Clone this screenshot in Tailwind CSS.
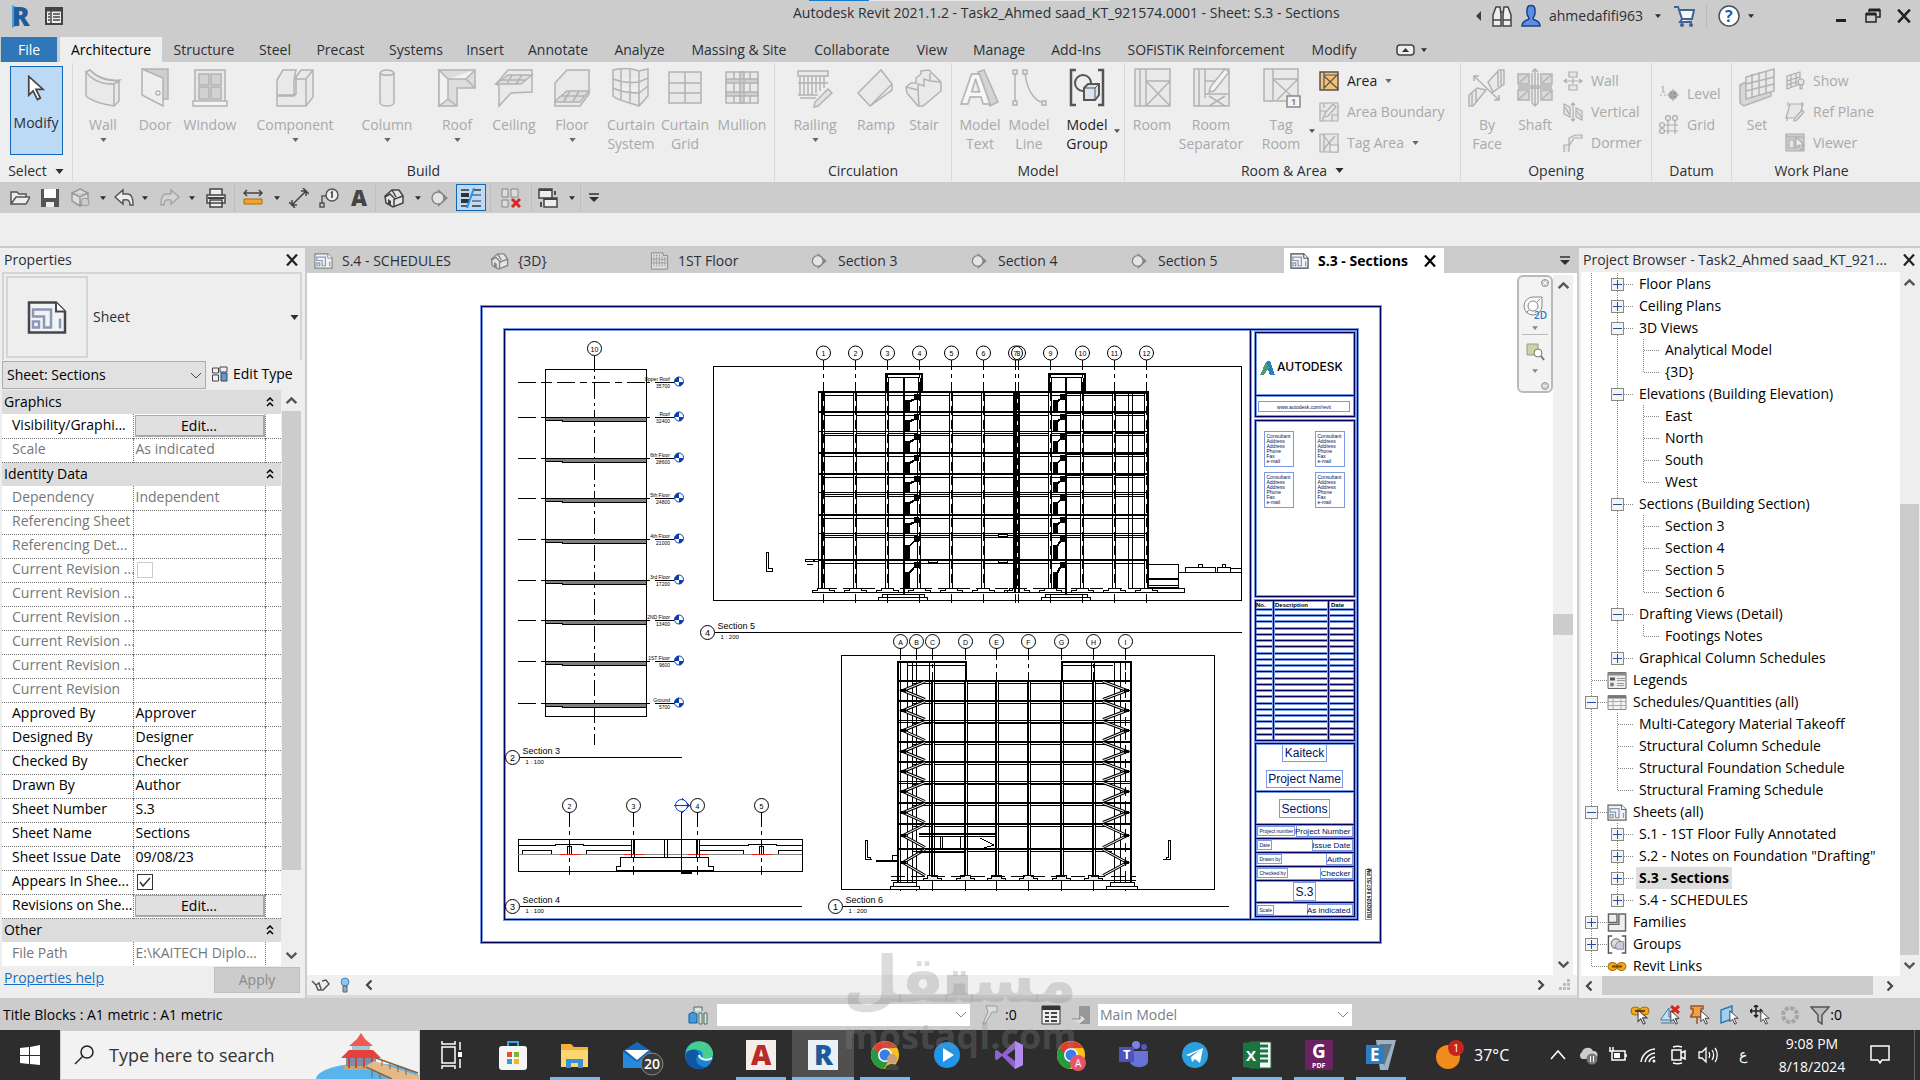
<!DOCTYPE html>
<html lang="en">
<head>
  <meta charset="UTF-8">
  <meta name="viewport" content="width=device-width, initial-scale=1.0">
  <title>Autodesk Revit 2021.1.2</title>
  <script src="https://cdn.jsdelivr.net/npm/@tailwindcss/browser@4"></script>
</head>
<body class="relative flex h-screen flex-col overflow-hidden bg-[#eeeeee] font-['Open_Sans',sans-serif] text-sm text-[#2b2f36]">

  <!-- Icon symbols -->
  <svg class="hidden">
    <symbol id="down" viewBox="0 0 8 5"><path d="M0 0h8L4 5z" fill="currentColor"/></symbol>
    <symbol id="chev" viewBox="0 0 12 12"><path d="M1.500 8.500L6 4l4.500 4.500" fill="none" stroke="currentColor" stroke-width="2.200"/></symbol>
    <symbol id="thin" viewBox="0 0 10 6"><path d="M0 0l5 5 5-5" fill="none" stroke="currentColor"/></symbol>
    <symbol id="close" viewBox="0 0 12 12"><path d="M1 0.500l10 11M11 0.500L1 11.500" stroke="currentColor" stroke-width="2.200"/></symbol>
    <symbol id="menu" viewBox="0 0 10 9"><path d="M0 1h10" stroke="currentColor" stroke-width="1.500"/><path d="M0 4h10L5 9z" fill="currentColor"/></symbol>

    <!-- Ribbon, large -->
    <symbol id="wall" viewBox="0 0 40 40"><path d="M3 4l4-2c8 8 18 11 30 10l-3 3C21 15 12 13 3 4z" fill="#f6f6f6"/><path d="M3 4l4-2c6 7 16 11 29 11v20l-5 5C20 36 10 34 3 28zM3 4c8 10 17 12 28 12v22M31 16l5-3"/></symbol>
    <symbol id="door" viewBox="0 0 40 40"><path d="M7 1h26v30h-5" fill="#cfcfcf"/><path d="M7 1l21 9v28L7 27z" fill="#eee"/><circle cx="23" cy="25" r="2" fill="#fff"/></symbol>
    <symbol id="window" viewBox="0 0 40 40"><path d="M5 2h30v32H5z"/><path d="M9 6h10v11H9zM21 6h10v11H21zM9 19h10v12H9zM21 19h10v12H21z" fill="#d2d2d2"/><path d="M3 33h34v5H3z" fill="#f4f4f4"/></symbol>
    <symbol id="component" viewBox="0 0 40 40"><path d="M2 12l6-10h13l-2 10v15H2zM21 9l5-7h12v27l-7 9H2V28h17M21 9v17l-2 2M24 11h-3M31 11l7-9M24 11h7v27"/></symbol>
    <symbol id="column" viewBox="0 0 40 40"><path d="M13 5v30c2 4 12 4 14 0V5c-2-4-12-4-14 0zM13 5c2 3 12 3 14 0"/></symbol>
    <symbol id="roof" viewBox="0 0 40 40"><path d="M2 2h36v18H20v18H2z" fill="#ddd"/><path d="M2 2l9 9v20L2 38zM38 2l-9 9H11M11 31l9 7M29 11l9 9" fill="#f2f2f2"/></symbol>
    <symbol id="ceiling" viewBox="0 0 40 40"><path d="M2 16L14 2h24v22l-21 1L5 38V18z"/><path d="M2 16L14 7h24l-11 9zM8 12h23M18 7l-5 9M28 7l-6 9" fill="#dedede"/></symbol>
    <symbol id="floor" viewBox="0 0 40 40"><path d="M3 15L15 2h22v24L28 38H3z"/><path d="M3 33l12-10h22L28 34H3zM9 28h23M18 23l-6 10M27 23l-6 10" fill="#dcdcdc"/></symbol>
    <symbol id="curtain" viewBox="0 0 40 40"><path d="M2 2c8-2 18-2 26 1l9-2v27l-9 10C18 34 9 34 2 28zM28 3v35M2 11c8 3 18 4 26 3l9-4M2 20c8 4 18 5 26 5l9-7M10 1v32M19 1v34"/></symbol>
    <symbol id="grid" viewBox="0 0 40 40"><path d="M4 4h32v31H4zM20 4v31M4 15h32M4 25h32" /></symbol>
    <symbol id="mullion" viewBox="0 0 40 40"><path d="M4 4h32v31H4zM12 4v31M28 4v31"/><path d="M4 11h32v4H4zM4 24h32v4H4zM18 4h4v31h-4z" fill="#d0d0d0"/></symbol>
    <symbol id="railing" viewBox="0 0 40 40"><path d="M3 3h30v5H3zM5 8v19M9 8v19M13 8v19M17 8v19M21 8v17M25 8v15M29 8v12M3 15h30M3 27h20M5 30h16"/><path d="M33 21l4 4-14 13-4 1 1-5z" fill="#e2e2e2"/></symbol>
    <symbol id="ramp" viewBox="0 0 40 40"><path d="M2 25L25 2l11 14v6L14 38zM36 16L14 38"/></symbol>
    <symbol id="stair" viewBox="0 0 40 40"><path d="M2 19l5-4h5v-5l5-4V3l8-1 12 12v9L19 38h-5L3 25z"/><path d="M2 19l12 3v-6l6 2v-7l6 2V5M14 22l1 16M26 13l11 1" fill="none"/></symbol>
    <symbol id="mtext" viewBox="0 0 40 40"><path d="M18 4l6-2 14 32-8 4z" fill="#d4d4d4"/><text x="1" y="36" font-family="Open Sans" font-weight="700" font-size="42" fill="#f7f7f7">A</text></symbol>
    <symbol id="mline" viewBox="0 0 40 40" ><path d="M6 4v31M16 4c1 15 8 29 19 31" fill="none"/><path d="M4 2h4v4H4zM4 33h4v4H4zM14 2h4v4h-4zM33 33h4v4h-4z"/></symbol>
    <symbol id="mgroup" viewBox="0 0 40 40"><g stroke="#555" stroke-width="2"><path d="M9 2H4v35h5M31 2h5v35h-5" fill="none" stroke-width="2.500"/><circle cx="16" cy="15" r="8" fill="#eee"/><path d="M17 20l4-4h11v11l-4 5H17z" fill="#dbe4ee"/><path d="M17 20h11v12M28 20l4-4" fill="none" stroke-width="1"/></g></symbol>
    <symbol id="room" viewBox="0 0 40 40"><path d="M3 1h35v37H3zM8 1v37M14 1v29M14 34v4M14 13h24v25H14zM14 13l24 25M38 13L14 38" /></symbol>
    <symbol id="roomsep" viewBox="0 0 40 40"><path d="M3 1h35v37H3zM8 1v37M14 1v29M14 26h24M18 28l16 10M34 28L18 38M14 13h10"/><path d="M34 1l4 3-15 19-5 1 2-6z" fill="#f3f3f3"/></symbol>
    <symbol id="tagroom" viewBox="0 0 40 40"><path d="M3 1h34v32H3zM12 1v32M12 11h25M12 11l24 22M37 11L16 32"/><path d="M26 28h13v11H26z" fill="#f4f4f4" stroke="#888"/><text x="30" y="37" font-size="9" font-weight="700" stroke="none" fill="#888">1</text></symbol>
    <symbol id="byface" viewBox="0 0 40 40"><path d="M2 27l8-7 9 2L6 38H2zM21 14L32 2h5v14L26 24zM7 8l25 24M7 13V8h5M32 27v5h-5M5 25v12M9 22v13M31 4v15M34 3v15" /></symbol>
    <symbol id="shaft" viewBox="0 0 40 40"><path d="M3 6h11v10H3zM26 6h11v10H26zM3 22h11v10H3zM26 22h11v10H26z" fill="#d8d8d8"/><path d="M3 18h34M3 20h34M17 5v30M23 5v30M20 1v37M17 4l3-3 3 3M17 35l3 3 3-3M4 15l9-8M27 15l9-8M4 31l9-8M27 31l9-8" fill="none"/></symbol>
    <symbol id="set" viewBox="0 0 40 40"><path d="M3 17l4-2 27-12v25L7 38l-4-3z" fill="#d6d6d6"/><path d="M9 9v22l28-8V1zM15 6v23M22 4v23M29 3v22M9 16l28-7M9 23l28-7"/></symbol>

    <!-- Ribbon, small -->
    <symbol id="area" viewBox="0 0 20 20"><path d="M1 1h18v18H1z" fill="#f6c173" stroke="#555" stroke-width="1.500"/><path d="M5 1v18M5 5l14 13M19 3L5 17M5 4h14" fill="none" stroke="#555"/></symbol>
    <symbol id="areab" viewBox="0 0 20 20"><path d="M1 1h18v18H1zM5 1v5M1 9h6M4 19v-4M13 19v-6h6"/><path d="M14 2l3 3-8 9-4 1 1-4z"/></symbol>
    <symbol id="areat" viewBox="0 0 20 20"><path d="M1 1h18v18H1zM4 2l12 15M16 3L4 17M5 1v18"/><path d="M11 12h8v7h-8z" fill="#eee"/></symbol>
    <symbol id="vwall" viewBox="0 0 20 20"><path d="M6 1h8v5H6zM6 14h8v5H6zM1 10h18M4 8l-3 2 3 2M16 8l3 2-3 2M10 7v6"/></symbol>
    <symbol id="vert" viewBox="0 0 20 20"><path d="M1 2l6 3v10l-6-3zM13 6l6 3v9l-6-3zM10 1v18M8 3l2-2 2 2M8 17l2 2 2-2M2 5l4 7M14 9l4 6"/></symbol>
    <symbol id="dormer" viewBox="0 0 20 20"><path d="M1 19v-7h5v7M6 12V5L12 2h7v3h-8l-5 8"/></symbol>
    <symbol id="level" viewBox="0 0 20 20"><path d="M1 11h2M5 11h2M9 11h2M4 2v6M3 3l1-1M3 8h3"/><circle cx="14" cy="11" r="4" fill="#999"/><path d="M14 5v12M8 11h12"/></symbol>
    <symbol id="gridi" viewBox="0 0 20 20"><path d="M9 6v13M16 6v13M5 10h14M5 16h14"/><circle cx="9" cy="3" r="2.500"/><circle cx="16" cy="3" r="2.500"/><circle cx="3" cy="10" r="2.500"/><circle cx="3" cy="16" r="2.500"/></symbol>
    <symbol id="show" viewBox="0 0 20 20"><path d="M2 5l13-4v12L2 18zM6 4v13M11 2v12M2 10l13-4M2 14l13-4"/><circle cx="16" cy="11" r="3"/><path d="M15 14h2v4h-2z"/></symbol>
    <symbol id="refp" viewBox="0 0 20 20"><path d="M5 2h13l-4 14H1zM3 0v4M17 0v5M2 15v4"/><path d="M17 8l2 2-7 8-3 1 1-3z"/></symbol>
    <symbol id="viewer" viewBox="0 0 20 20"><path d="M1 1h18v17H1zM1 4h18" fill="#ccc"/><path d="M4 7h5v8H4z"/><path d="M11 4v11l3-3 2 5 2-1-2-4h3z" fill="#eee"/></symbol>

    <!-- Documents and tree -->
    <symbol id="sheet" viewBox="0 0 40 34"><path d="M2 2h27l9 9v21H2z" fill="#f2f3f5" stroke="currentColor" stroke-width="2.500"/><path d="M29 2v9h9" fill="#fff" stroke="currentColor" stroke-width="2"/><path d="M6 9h18v18h-7V16H6zM6 21h6v6H6zM33 18v10" fill="none" stroke="#8a97b5" stroke-width="2.500"/></symbol>
    <symbol id="house" viewBox="0 0 20 20"><path d="M1 8l7-6 7 0 4 6v7l-10 4-7-4z" fill="#e4e4e4" stroke="currentColor" stroke-width="1.500"/><path d="M1 9l5-3 5 5 8-3M10 11v8M8 2l4 7" fill="none" stroke="currentColor" stroke-width="1.500"/><path d="M4 11l3 2v5l-3-2z" fill="currentColor"/></symbol>
    <symbol id="plan" viewBox="0 0 20 20"><path d="M1 1h13v3h5v15H1z" fill="#ddd" stroke="currentColor"/><path d="M4 3v13M7 3v13M10 3v13M13 5v11M16 6v10M2 8h16M2 12h16" stroke="currentColor" stroke-dasharray="2 1"/></symbol>
    <symbol id="sect" viewBox="0 0 20 20"><path d="M8 1l10 9-10 9z" fill="currentColor"/><circle cx="8" cy="10" r="6" fill="#e4e4e4" stroke="currentColor" stroke-width="1.500"/></symbol>
    <symbol id="legend" viewBox="0 0 20 18"><path d="M1 1h18v16H1z" fill="#eee" stroke="#666"/><path d="M1 1h18v3H1z" fill="#888"/><path d="M3 6h5v3H3z" fill="#555"/><circle cx="5" cy="13" r="2" fill="#777"/><path d="M10 7h8M10 9h8M10 12h7M10 14h7" stroke="#999"/></symbol>
    <symbol id="sched" viewBox="0 0 20 16"><path d="M1 1h18v14H1z" fill="#f4f4f4" stroke="#888"/><path d="M1 1h18v3H1z" fill="#777"/><path d="M1 7h18M1 11h18M6 4v11M14 4v11" stroke="#aaa"/></symbol>
    <symbol id="family" viewBox="0 0 20 20"><path d="M1 1h9v9H1zM12 1h7v18H1v-7h11z" fill="#eee" stroke="#666" stroke-width="1.500"/></symbol>
    <symbol id="group" viewBox="0 0 20 20"><path d="M5 1H1v18h4M15 1h4v18h-4" fill="none" stroke="#555" stroke-width="1.500"/><circle cx="9" cy="9" r="5" fill="#ddd" stroke="#888" stroke-width="1.500"/><path d="M8 11l3-4h6v8h-7z" fill="#ccd" stroke="#888"/></symbol>
    <symbol id="link" viewBox="0 0 20 12"><rect x="1" y="2" width="9" height="8" rx="4" fill="#f3a71b" stroke="#a96c06"/><rect x="10" y="2" width="9" height="8" rx="4" fill="#f3a71b" stroke="#a96c06"/><path d="M5 6h10" stroke="#704300" stroke-width="2"/></symbol>
    <symbol id="cursor" viewBox="0 0 12 18"><path d="M1 1v13l3-3 3 6 2-1-3-6h5z" fill="#fff" stroke="#444" stroke-width="1.200"/></symbol>
    <symbol id="chrome" viewBox="0 0 30 30"><circle cx="15" cy="15" r="14" fill="#fbc116"/><path d="M2.900 8A14 14 0 0 0 14 29l6-11-5-3z" fill="#249a41"/><path d="M3 8A14 14 0 0 1 27 8H15l-5 6z" fill="#e33b2e"/><circle cx="15" cy="15" r="7" fill="#fff"/><circle cx="15" cy="15" r="5.500" fill="#3b7de8"/></symbol>
  </svg>

  <!-- Title bar -->
  <header class="grid h-[37px] shrink-0 grid-cols-[793px_1fr_auto] bg-[#cccccc]">
    <div class="flex items-center gap-2 pb-[5px] pl-2">
      <svg class="size-7" viewBox="0 0 28 28"><path d="M4 3l4 2v19l-4 2z" fill="#4ba3dc"/><text x="4" y="24" font-family="Open Sans" font-weight="800" font-size="26" fill="#1f5c9c">R</text></svg>
      <svg class="size-5" viewBox="0 0 20 20"><path d="M2 2h16v16H2z" fill="#eee" stroke="#444" stroke-width="2"/><path d="M2 4h16" stroke="#444" stroke-width="3"/><path d="M7 5v13M9 8h7M9 11h7M9 14h7M4 8h2M4 11h2M4 14h2" stroke="#444" stroke-width="1.500"/></svg>
    </div>
    <div>
      <div class="ml-4 flex h-px w-[301px] bg-[#e6e6e6]"><div class="w-[60px] bg-[#1979ca]"></div></div>
      <h1 class="pt-[2px] whitespace-nowrap">Autodesk Revit 2021.1.2 - Task2_Ahmed saad_KT_921574.0001 - Sheet: S.3 - Sections</h1>
    </div>
    <div class="flex items-center pr-[9px] pb-[5px]">
      <svg class="mr-[10px] h-[10px] w-[5px]" viewBox="0 0 6 12"><path d="M6 0v12L0 6z" fill="#3a3f4a"/></svg>
      <svg class="mr-2 h-6 w-[22px]" viewBox="0 0 22 24"><g fill="#eee" stroke="#444" stroke-width="1.500"><path d="M2 22V11l3-8h4l1 8v11zM20 22V11l-3-8h-4l-1 8v11zM2 16h8M12 16h8M9 8h4"/></g></svg>
      <svg class="mr-2 h-6 w-5" viewBox="0 0 20 24"><path d="M6 6c0-6 8-6 8 0v3c0 3-2 4-2 6 0 1 7 1 7 7H1c0-6 7-6 7-7 0-2-2-3-2-6z" fill="#5b8ee6" stroke="#203f86" stroke-width="1.500"/></svg>
      <button class="flex items-center gap-3">ahmedafifi963<svg class="h-1 w-[6px]"><use href="#down"/></svg></button>
      <svg class="ml-3 h-6 w-[22px]" viewBox="0 0 22 24"><path d="M1 3h4l4 12h10l2-9H6M9 15l-2 3h12" fill="#f4f7fa" stroke="#3f6494" stroke-width="2"/><circle cx="9" cy="21" r="2" fill="#3f6494"/><circle cx="18" cy="21" r="2" fill="#3f6494"/></svg>
      <div class="mx-[11px] h-6 w-px bg-[#bbbbbb]"></div>
      <svg class="size-[22px]" viewBox="0 0 22 22"><circle cx="11" cy="11" r="10" fill="#fff" stroke="#4a4f58" stroke-width="1.500"/><text x="7" y="17" font-size="16" font-weight="700" fill="#1c5fb8">?</text></svg>
      <svg class="ml-2 h-1 w-[6px]"><use href="#down"/></svg>
      <button class="ml-[82px] pt-2" aria-label="Minimize"><svg class="h-[3px] w-[10px]"><rect width="10" height="3" fill="#222"/></svg></button>
      <button class="ml-[19px]" aria-label="Restore"><svg class="h-4 w-4" viewBox="0 0 16 16"><path d="M4 4V2h11v7h-3M1 6h10v8H1z" fill="none" stroke="#222" stroke-width="1.500"/><path d="M1 6h10M4 2h11" stroke="#222" stroke-width="3"/></svg></button>
      <button class="ml-4" aria-label="Close"><svg class="size-[14px] text-[#222]"><use href="#close"/></svg></button>
    </div>
  </header>

  <!-- Ribbon tabs -->
  <nav id="tabs" class="flex h-[25px] shrink-0 items-stretch bg-[#cccccc] pl-px whitespace-nowrap"></nav>

  <!-- Ribbon -->
  <section id="ribbon" class="flex h-[120px] shrink-0 py-px"></section>

  <!-- Quick access -->
  <div id="quick" class="flex h-[31px] shrink-0 items-center bg-[#cccccc] pl-[6px]"></div>
  <div class="h-[33px] shrink-0"></div>

  <main class="flex min-h-0 flex-1 border-t-2 border-[#cccccc]">

    <!-- Properties -->
    <aside class="flex w-[307px] shrink-0 flex-col border-r-2 border-[#cccccc]">
      <div class="flex h-6 items-center justify-between pr-[7px] pl-1"><h2>Properties</h2><button aria-label="Close properties"><svg class="size-3 text-[#222]"><use href="#close"/></svg></button></div>
      <div class="mr-[3px] ml-[2px] flex h-[88px] items-center border-2 border-b-0 border-[#d4d4d4] pr-px pl-[2px]">
        <div class="flex size-[82px] items-center justify-center border-2 border-[#d4d4d4]"><svg class="h-[35px] w-10 text-[#42464e]"><use href="#sheet"/></svg></div>
        <span class="ml-[5px] flex-1">Sheet</span>
        <svg class="h-[5px] w-[9px]"><use href="#down"/></svg>
      </div>
      <div class="flex h-[30px] items-center pr-1 pl-[2px] text-black">
        <div class="relative w-[204px]">
          <select aria-label="Instance" class="h-7 w-full appearance-none border border-[#acacac] bg-[#e1e1e1] pl-1"><option>Sheet: Sections</option></select>
          <svg class="pointer-events-none absolute top-3 right-[5px] h-[6px] w-[10px] text-[#444]"><use href="#thin"/></svg>
        </div>
        <button class="flex flex-1 items-center gap-[5px] pb-[2px] pl-[6px]"><svg class="size-4" viewBox="0 0 16 16"><g fill="#eef" stroke="#444"><path d="M.5 2h6v5h-6zM8 1h7v5H8zM.5 9h6v6h-6z"/><path d="M9 7h6v8H9z" fill="#5b9bd0"/></g></svg>Edit Type</button>
      </div>
      <div class="flex min-h-0 flex-1 pl-[2px]">
        <div class="w-[279px] overflow-hidden bg-white">
          <table class="w-full table-fixed border-collapse text-black"><colgroup><col class="w-[131px]"><col class="w-[132px]"><col class="w-4"></colgroup><tbody id="props"></tbody></table>
        </div>
        <div class="ml-px flex w-[19px] flex-col items-center text-[#555]">
          <svg class="my-1 size-[13px]"><use href="#chev"/></svg>
          <div class="h-[459px] w-full bg-[#cccccc]"></div>
          <svg class="mt-auto mb-1 size-[13px] rotate-180"><use href="#chev"/></svg>
        </div>
      </div>
      <div class="flex h-8 items-start justify-between pr-[5px] pl-1">
        <a href="#" class="pt-[2px] text-[#1a6fc4] underline">Properties help</a>
        <button disabled class="mt-px h-[26px] w-[86px] border border-[#bfbfbf] bg-[#cccccc] text-[#8a8a8a]">Apply</button>
      </div>
    </aside>

    <!-- Document area -->
    <section class="flex min-w-0 flex-1 flex-col">
      <div class="flex h-[25px] shrink-0 bg-[#cccccc]">
        <div id="docs" class="flex flex-1"></div>
        <button class="pr-[7px]" aria-label="Open views"><svg class="h-[9px] w-[10px]"><use href="#menu"/></svg></button>
      </div>
      <div class="relative flex min-h-0 flex-1 bg-white">
        <svg id="sheetView" class="min-w-0 flex-1" viewBox="307 273 1246 702" font-family="Liberation Sans" fill="none" stroke="#000"></svg>
        <div class="absolute top-[2px] right-6 flex h-[118px] w-9 flex-col items-center rounded-md border-2 border-[#b9b9b9] bg-[#f3f3f3] text-[#888]">
          <svg class="mt-[2px] mr-[2px] size-2 self-end" viewBox="0 0 8 8"><circle cx="4" cy="4" r="3.500" fill="#ccc" stroke="#999"/><path d="M2 2l4 4M6 2L2 6" stroke="#fff"/></svg>
          <svg class="mt-2 h-[26px] w-7" viewBox="0 0 28 26"><path d="M12 2h9v9a9 9 0 1 1-9-9z" fill="#f8f8f8" stroke="#888"/><circle cx="12" cy="11" r="5" fill="#fff" stroke="#888"/><path d="M8 15l-3 3M16 7l3-3" stroke="#888"/><text x="13" y="24" font-size="10" font-weight="600" fill="#3677b8">2D</text></svg>
          <svg class="mt-[5px] h-1 w-[6px]"><use href="#down"/></svg>
          <div class="mt-1 h-px w-[26px] bg-[#b9b9b9]"></div>
          <svg class="mt-[6px] h-5 w-5" viewBox="0 0 20 20"><path d="M2 3h11v11H2z" fill="#cdd2a0" stroke="#999"/><circle cx="13" cy="12" r="4" fill="#fff" stroke="#777"/><path d="M16 15l3 4" stroke="#777" stroke-width="2"/></svg>
          <svg class="mt-2 h-1 w-[6px]"><use href="#down"/></svg>
          <svg class="mt-auto mr-[2px] mb-px size-2 self-end" viewBox="0 0 8 8"><circle cx="4" cy="4" r="3.500" fill="#ccc" stroke="#999"/><path d="M2 4h4" stroke="#fff"/></svg>
        </div>
        <div class="mt-[2px] mr-1 flex w-5 flex-col items-center bg-[#f0f0f0] text-[#555]">
          <svg class="mt-1 size-[13px] shrink-0"><use href="#chev"/></svg>
          <div class="mt-[322px] h-[21px] w-full bg-[#cdcdcd]"></div>
          <svg class="mt-auto mb-1 size-[13px] rotate-180"><use href="#chev"/></svg>
        </div>
      </div>
      <div class="flex h-[23px] shrink-0 items-center border-b-[3px] border-[#dadada] bg-[#f0f0f0] pl-1 text-[#444]">
        <svg class="h-4 w-5" viewBox="0 0 20 16"><path d="M1 4l4 4 3-2 2 6M5 8l2 5h5l6-6-3-4-4 1" fill="#eee" stroke="#555" stroke-width="1.500"/></svg>
        <svg class="ml-2 h-4 w-3" viewBox="0 0 12 16"><circle cx="6" cy="5" r="4" fill="#8fc3ef" stroke="#4a86bd"/><path d="M4 9h4v6H4z" fill="#9ab" stroke="#567"/></svg>
        <svg class="ml-3 size-3 -rotate-90"><use href="#chev"/></svg>
        <div class="ml-[572px] h-5 w-[21px] bg-[#cdcdcd]"></div>
        <svg class="ml-auto size-3 rotate-90"><use href="#chev"/></svg>
        <svg class="mr-[6px] ml-3 size-3" viewBox="0 0 12 12"><path d="M8 0h3v3H8zM8 4h3v3H8zM4 4h3v3H4zM8 8h3v3H8zM4 8h3v3H4zM0 8h3v3H0z" fill="#bbb"/></svg>
      </div>
    </section>

    <!-- Project Browser -->
    <aside class="flex w-[343px] shrink-0 flex-col border-l-2 border-[#cccccc]">
      <div class="flex h-6 shrink-0 items-center justify-between pr-[5px] pl-1 whitespace-nowrap"><h2>Project Browser - Task2_Ahmed saad_KT_921...</h2><button aria-label="Close browser"><svg class="size-3 text-[#222]"><use href="#close"/></svg></button></div>
      <div class="flex min-h-0 flex-1 pl-[2px]">
        <ul id="tree" class="flex-1 overflow-hidden bg-white pt-px text-black"></ul>
        <div class="mr-px flex w-[19px] flex-col items-center text-[#555]">
          <svg class="mt-1 size-[13px]"><use href="#chev"/></svg>
          <div class="mt-auto h-[451px] w-full bg-[#cccccc]"></div>
          <svg class="my-1 size-[13px] rotate-180"><use href="#chev"/></svg>
        </div>
      </div>
      <div class="mb-[3px] flex h-[19px] shrink-0 items-center justify-between pr-6 pl-1 text-[#444]">
        <svg class="size-3 -rotate-90"><use href="#chev"/></svg>
        <div class="mx-[7px] h-full flex-1 bg-[#cccccc]"></div>
        <svg class="ml-1 size-3 rotate-90"><use href="#chev"/></svg>
      </div>
    </aside>
  </main>

  <!-- Status bar -->
  <footer class="flex h-8 shrink-0 items-center bg-[#cccccc] pt-[2px] pl-[3px] text-black">
    <span class="w-[685px]">Title Blocks : A1 metric : A1 metric</span>
    <svg class="h-5 w-5" viewBox="0 0 20 20"><path d="M1 9l4-2 4 2v9H1z" fill="#3d9be0" stroke="#1a5b94"/><path d="M6 6V2h8v4M11 8h3v11h-3zM16 8h3v11h-3z" fill="#dfe8e0" stroke="#45705a"/></svg>
    <div class="relative ml-[9px] w-[253px]">
      <select aria-label="Active workset" class="block h-[22px] w-full appearance-none bg-white"></select>
      <svg class="pointer-events-none absolute top-2 right-1 h-[6px] w-[10px] text-[#888]"><use href="#thin"/></svg>
    </div>
    <svg class="ml-3 h-5 w-4" viewBox="0 0 16 20"><path d="M4 1h11v6h-5L3 19H1l5-12z" fill="#ddd" stroke="#999"/></svg>
    <span class="ml-[7px] w-9">:0</span>
    <svg class="h-5 w-5" viewBox="0 0 20 20"><path d="M1 1h18v18H1z" fill="#eee" stroke="#333"/><path d="M1 3h18" stroke="#333" stroke-width="4"/><path d="M4 8h4M4 12h4M4 16h4M10 8h6M10 12h6M10 16h6" stroke="#444" stroke-width="2"/></svg>
    <svg class="ml-[10px] h-5 w-5" viewBox="0 0 20 20"><path d="M8 1h11v18H8z" fill="#999"/><path d="M1 14h8v-5l6 5-6 5" fill="#ddd" stroke="#888"/></svg>
    <div class="relative ml-[7px] w-[254px]">
      <select aria-label="Design option" class="block h-[22px] w-full appearance-none bg-white pl-[2px] text-[#7a7f86]"><option>Main Model</option></select>
      <svg class="pointer-events-none absolute top-2 right-1 h-[6px] w-[10px] text-[#888]"><use href="#thin"/></svg>
    </div>
    <div class="mr-[78px] ml-auto flex items-center gap-[10px]">
      <svg class="size-5" viewBox="0 0 20 20"><use href="#link" width="20" height="12"/><use href="#cursor" x="7" y="4" width="11" height="16"/></svg>
      <svg class="size-5" viewBox="0 0 20 20"><path d="M1 14L9 3v9h8v3H1zM1 18h13" fill="#bfe0f5" stroke="#3878a8"/><path d="M11 1l8 7M19 1l-8 7" stroke="#d22" stroke-width="3"/><use href="#cursor" x="10" y="5" width="10" height="15"/></svg>
      <svg class="size-5" viewBox="0 0 20 20"><path d="M1 1h12v3h-2v4l3 4H0l3-4V4H1zM7 12v7" fill="#f0a045" stroke="#a4521a" stroke-width="1.500"/><use href="#cursor" x="10" y="5" width="10" height="15"/></svg>
      <svg class="size-5" viewBox="0 0 20 20"><path d="M1 5l11-4v13L1 18z" fill="#9ed0f0" stroke="#3878a8" stroke-width="1.500"/><use href="#cursor" x="9" y="5" width="10" height="15"/></svg>
      <svg class="size-5" viewBox="0 0 20 20"><path d="M6 0v12M0 6h12M4 2l2-2 2 2M4 10l2 2 2-2M2 4L0 6l2 2M10 4l2 2-2 2" fill="none" stroke="#222" stroke-width="1.500"/><use href="#cursor" x="10" y="5" width="10" height="15"/></svg>
      <svg class="size-5" viewBox="0 0 20 20"><circle cx="10" cy="10" r="7" fill="none" stroke="#a5a5a5" stroke-width="4" stroke-dasharray="4 1.500"/></svg>
      <span class="flex items-center"><svg class="size-5" viewBox="0 0 20 20"><path d="M1 2h18l-7 8v9l-4-3v-6z" fill="#bbb" stroke="#555" stroke-width="1.500"/></svg>:0</span>
    </div>
  </footer>

  <!-- Windows taskbar -->
  <div class="flex h-[50px] shrink-0 bg-[#2d2d2d] text-white">
    <button class="flex w-[60px] items-center justify-center" aria-label="Start"><svg class="size-5" viewBox="0 0 20 20"><path d="M0 3l9-1v8H0zM10 2l10-2v10H10zM0 11h9v8l-9-1zM10 11h10v9l-10-1z" fill="#fff"/></svg></button>
    <label class="flex w-[360px] items-center border border-[#cccccc] bg-[#f2f2f2] text-[#333]">
      <svg class="ml-[13px] size-5" viewBox="0 0 20 20"><circle cx="13" cy="7" r="6" fill="none" stroke="#222" stroke-width="1.500"/><path d="M8.500 11.500L1 19" stroke="#222" stroke-width="1.500"/></svg>
      <input class="ml-[15px] w-[200px] text-lg placeholder-[#333]" placeholder="Type here to search">
      <svg class="ml-auto h-12 w-[105px]" viewBox="0 0 105 48"><ellipse cx="54" cy="48" rx="52" ry="16" fill="#58b4ec"/><path d="M30 34h34v5H30z" fill="#caa27a"/><path d="M32 26h30v9H32z" fill="#7a8fb0"/><path d="M35 25v12M42 25v12M50 25v12M58 25v12" stroke="#c14a3c" stroke-width="2"/><path d="M27 27l8-8h24l8 8z" fill="#e5413c"/><path d="M38 19v-4h18v4z" fill="#a8c6d8"/><path d="M35 15l8-7 4-6 4 6 8 7z" fill="#f05a50"/><path d="M60 30l45 15v3H76L50 36z" fill="#e2b988"/><path d="M62 27l42 15M52 36l26 12" stroke="#8c6138" stroke-width="1.500"/><path d="M68 29v6M76 32v6M84 35v6M92 38v6M58 39v8M66 42v6" stroke="#8c6138"/></svg>
    </label>
    <div id="apps" class="flex"></div>
    <div class="ml-auto flex items-center">
      <svg class="h-8 w-8" viewBox="0 0 32 32"><circle cx="14" cy="18" r="12" fill="#f08c1d"/><circle cx="22" cy="9" r="8" fill="#c6231c"/><text x="19" y="13" font-size="11" fill="#fff">1</text></svg>
      <span class="ml-2 w-[74px] text-base">37°C</span>
      <div class="flex items-center gap-[10px]">
        <svg class="w-5" viewBox="0 0 20 20"><path d="M3 14l7-8 7 8" fill="none" stroke="#fff" stroke-width="1.500"/></svg>
        <svg class="w-5" viewBox="0 0 20 20"><path d="M4 14a4 4 0 0 1 0-7 6 6 0 0 1 11-1 4 4 0 0 1 1 8z" fill="#ccc"/><circle cx="14" cy="14" r="5.500" fill="#777"/><path d="M12.500 11v6M15.500 11v6" stroke="#fff"/></svg>
        <svg class="w-5" viewBox="0 0 20 20"><path d="M4 6h13v9H4zM18 9v3M2 2v4M5 2v4M1 6h5" fill="none" stroke="#fff" stroke-width="1.500"/><path d="M6 8h6v5H6z" fill="#fff"/></svg>
        <svg class="w-5" viewBox="0 0 20 20"><path d="M3 17A15 15 0 0 1 17 4M7 17A11 11 0 0 1 17 8M11 17a7 7 0 0 1 6-5" fill="none" stroke="#fff" stroke-width="1.500"/><circle cx="16" cy="16" r="1.500" fill="#fff"/></svg>
        <svg class="w-5" viewBox="0 0 20 20"><path d="M4 5h9v10H4zM13 8l4-2v8l-4-2M5 2c3-1 6-1 9 0M5 18c3 1 6 1 9 0" fill="none" stroke="#fff" stroke-width="1.500"/></svg>
        <svg class="w-5" viewBox="0 0 20 20"><path d="M1 7h3l4-4v14l-4-4H1zM11 7c1 2 1 4 0 6M14 5c2 3 2 7 0 10M17 3c3 4 3 10 0 14" fill="none" stroke="#fff" stroke-width="1.300"/></svg>
      </div>
      <span class="ml-[21px] w-9 font-['DejaVu_Sans']">ع</span>
      <div class="w-[74px] text-center text-sm leading-[23px]">9:08 PM<br>8/18/2024</div>
      <svg class="mr-6 ml-[21px] size-5" viewBox="0 0 20 20"><path d="M1 1h18v14h-7l-2 3-2-3H1z" fill="none" stroke="#fff" stroke-width="1.500"/></svg>
      <div class="mr-[5px] h-[50px] w-px bg-[#666]"></div>
    </div>
  </div>

  <!-- Watermark -->
  <div class="pointer-events-none absolute bottom-6 left-1/2 w-[240px] -translate-x-1/2 text-center font-bold text-[#8c8c8c]/30">
    <div dir="rtl" class="font-['DejaVu_Sans'] text-[64px] leading-[72px]">مستقل</div>
    <div class="text-[36px] leading-[40px]">mostaql.com</div>
  </div>

  <script>
    const $ = id => document.getElementById(id);
    const arrow = '<svg class="h-1 w-[7px] text-[#666]"><use href="#down"/></svg>';

    // Ribbon tabs
    const tabs = [['Structure', 'w-[84px]'], ['Steel', 'w-[58px]'], ['Precast', 'w-[73px]'], ['Systems', 'w-[78px]'], ['Insert', 'w-[60px]'], ['Annotate', 'w-[86px]'], ['Analyze', 'w-[77px]'],
      ['Massing & Site', 'w-[122px]'], ['Collaborate', 'w-[104px]'], ['View', 'w-14'], ['Manage', 'w-[78px]'], ['Add-Ins', 'w-[76px]'], ['SOFiSTiK Reinforcement', 'w-[184px]'], ['Modify', 'w-[72px]']];
    $('tabs').innerHTML = `
      <button class="w-14 bg-[#2e78b7] text-white">File</button>
      <button class="ml-[3px] w-[102px] bg-[#eeeeee] text-black">Architecture</button>
      ${tabs.map(([t, w]) => `<button class="${w}">${t}</button>`).join('')}
      <button class="flex items-center gap-[6px] pl-[26px]" aria-label="Minimize ribbon">
        <svg class="h-3 w-[19px]" viewBox="0 0 19 12"><rect x="1" y="1" width="17" height="10" rx="3" fill="#eee" stroke="#444" stroke-width="1.500"/><path d="M6 8h7l-3.500-4z" fill="#333"/></svg>
        <svg class="h-1 w-[6px]"><use href="#down"/></svg>
      </button>`;

    // Ribbon panels: big buttons [icon, label, width, dropdown], small stacks [icon, label, dropdown]
    const panels = [
      { title: 'Build', w: 'w-[702px]', big: [
        ['wall', 'Wall', 'w-[60px]', 1], ['door', 'Door', 'w-11'], ['window', 'Window', 'w-[66px]'], ['component', 'Component', 'w-[104px]', 1],
        ['column', 'Column', 'w-20', 1], ['roof', 'Roof', 'w-[60px]', 1], ['ceiling', 'Ceiling', 'w-[54px]'], ['floor', 'Floor', 'w-[62px]', 1],
        ['curtain', 'Curtain<br>System', 'w-14'], ['grid', 'Curtain<br>Grid', 'w-[52px]'], ['mullion', 'Mullion', 'w-[62px]']] },
      { title: 'Circulation', w: 'w-[177px]', big: [['railing', 'Railing', 'w-20', 1], ['ramp', 'Ramp', 'w-[42px]'], ['stair', 'Stair', 'w-[54px]']] },
      { title: 'Model', w: 'w-[173px]', big: [['mtext', 'Model<br>Text', 'w-14'], ['mline', 'Model<br>Line', 'w-[42px]'], ['mgroup', 'Model<br>Group', 'w-[74px]', 2]] },
      { title: 'Room &amp; Area', menu: 1, w: 'w-[336px]', big: [['room', 'Room', 'w-[54px]'], ['roomsep', 'Room<br>Separator', 'w-16'], ['tagroom', 'Tag<br>Room', 'w-[76px]', 3]],
        small: [['area', 'Area', 2], ['areab', 'Area Boundary'], ['areat', 'Tag Area', 1]] },
      { title: 'Opening', w: 'w-[191px]', big: [['byface', 'By<br>Face', 'w-[52px]'], ['shaft', 'Shaft', 'w-11']], pad: 'pl-[6px]',
        small: [['vwall', 'Wall'], ['vert', 'Vertical'], ['dormer', 'Dormer']] },
      { title: 'Datum', w: 'w-20', big: [], pad: 'pt-[15px] pl-[7px]', small: [['level', 'Level'], ['gridi', 'Grid']] },
      { title: 'Work Plane', w: 'w-[159px]', last: 1, big: [['set', 'Set', 'w-[50px]']], pad: 'pl-[3px]', small: [['show', 'Show'], ['refp', 'Ref Plane'], ['viewer', 'Viewer']] }
    ];

    const bigBtn = ([icon, label, w, drop]) => {
      const on = drop === 2;
      const side = drop >= 2 ? '<span class="absolute top-[66px] right-1"><svg class="h-1 w-[6px] text-[#555]"><use href="#down"/></svg></span>' : '';
      return `<button ${on ? '' : 'disabled'} class="relative flex ${w} shrink-0 flex-col items-center pt-[5px] leading-[19px] ${on ? 'text-[#1d1f24]' : 'text-[#a9a9a9]'}">
        <svg class="mb-[7px] h-10 w-10 shrink-0" fill="#e9e9e9" stroke="#b3b3b3" stroke-width="1.500"><use href="#${icon}"/></svg>
        <span class="whitespace-nowrap">${label}</span>${drop === 1 ? `<span class="pt-1 leading-none">${arrow}</span>` : side}</button>`;
    };
    const smallBtn = ([icon, label, drop]) => `
      <button ${drop === 2 ? '' : 'disabled'} class="flex h-[31px] items-center gap-2 whitespace-nowrap ${drop === 2 ? 'text-[#1d1f24]' : 'text-[#a9a9a9]'}">
        <svg class="size-5 shrink-0" fill="#e6e6e6" stroke="#adadad" stroke-width="1.200"><use href="#${icon}"/></svg>${label}${drop ? arrow : ''}</button>`;

    $('ribbon').innerHTML = `
      <div class="flex w-[73px] shrink-0 flex-col items-center border-r border-[#d8d8d8]">
        <button class="mt-[3px] flex h-[89px] w-[53px] flex-col items-center border border-[#1467b8] bg-[#bcd9f5] pt-2">
          <svg class="mb-3 h-[26px] w-[18px]"><use href="#cursor"/></svg>Modify</button>
        <button class="mt-auto flex items-center gap-2">Select<svg class="h-[5px] w-[9px]"><use href="#down"/></svg></button>
      </div>` + panels.map(p => `
      <div class="flex ${p.w} shrink-0 flex-col ${p.last ? '' : 'border-r border-[#d8d8d8]'}">
        <div class="flex h-[97px]">${p.big.map(bigBtn).join('')}
          ${p.small ? `<div class="${p.pad || ''} ${p.small.length > 2 ? 'pt-[2px]' : ''}">${p.small.map(smallBtn).join('')}</div>` : ''}</div>
        <div class="flex flex-1 items-center justify-center gap-2">${p.title}${p.menu ? '<svg class="h-[5px] w-[9px]"><use href="#down"/></svg>' : ''}</div>
      </div>`).join('');

    // Quick access toolbar: [drawing, width, dropdown width]
    const quick = [
      ['<path d="M1 16V4h6l2 2h7v3M1 16l5-7h14l-4 7z" fill="#eee" stroke="#555" stroke-width="1.500"/>', 'w-7'],
      ['<path d="M1 1h18v18H1z" fill="#555"/><path d="M4 1h12v9H4z" fill="#fff"/><path d="M6 14h8v5H6z" fill="#eee"/>', 'w-8'],
      ['<path d="M10 1l8 4v8l-8 5-8-5V5zM2 5l8 4 8-4M10 9v9" fill="#ddd" stroke="#999" stroke-width="1.500"/><circle cx="15" cy="14" r="4" fill="#ccc" stroke="#999"/>', 'w-7', 'w-[18px]'],
      ['<path d="M1 9l8-7v4h5c4 0 5 4 5 11h-3c0-5-2-6-7-5v4z" fill="#eee" stroke="#555" stroke-width="1.500"/>', 'w-6', 'w-[18px]'],
      ['<path d="M19 9l-8-7v4H6c-4 0-5 4-5 11h3c0-5 2-6 7-5v4z" fill="#d4d4d4" stroke="#a5a5a5" stroke-width="1.500"/>', 'w-8', 'w-3'],
      ['<path d="M4 1h12v6H4zM1 7h18v8H1zM4 12h12v7H4z" fill="#eee" stroke="#444" stroke-width="1.500"/><path d="M2 10h16" stroke="#444" stroke-width="2"/>', 'w-9'],
      '|',
      ['<path d="M1 5h18M4 2L1 5l3 3M16 2l3 3-3 3" fill="none" stroke="#444" stroke-width="1.500"/><path d="M1 11h18v5H1z" fill="#f0a52a" stroke="#a86d10"/>', 'w-9', 'w-3'],
      ['<path d="M3 17L17 3M3 12v5h5M17 8V3h-5M0 14l6 6M14 0l6 6" fill="none" stroke="#444" stroke-width="1.500"/>', 'w-8'],
      ['<circle cx="13" cy="7" r="6" fill="#eee" stroke="#555" stroke-width="1.500"/><path d="M7 8H3v8M1 15h4v4H1z" fill="none" stroke="#555" stroke-width="1.500"/><path d="M12 5l1-1v6" fill="none" stroke="#333" stroke-width="1.500"/>', 'w-7'],
      ['<text x="2" y="18" font-size="22" font-weight="800" fill="#444">A</text>', 'w-8'],
      '|',
      ['<use href="#house" color="#444"/>', 'w-9', 'w-3'],
      ['<use href="#sect" color="#888"/>', 'w-8'],
      ['<path d="M0 2h8M12 2h8M0 18h7M11 18h9" stroke="#333" stroke-width="1.500"/><path d="M0 7h8M0 13h8" stroke="#333" stroke-width="4"/><path d="M11 7h9M11 13h9" stroke="#333"/><path d="M13 0L6 20" stroke="#2694f0" stroke-width="2"/>', 'on'],
      '|',
      ['<path d="M1 1h6v8H1zM10 1h7v8h-7zM1 12h6v7H1z" fill="#ddd" stroke="#888"/><path d="M11 11l8 8M19 11l-8 8" stroke="#d8281f" stroke-width="3"/>', 'w-10'],
      '|',
      ['<path d="M1 1h13v9H1zM6 10h13v9H6z" fill="#eee" stroke="#444" stroke-width="1.500"/><path d="M1 2h13M6 11h13" stroke="#444" stroke-width="2"/><path d="M17 3v4M3 14v5" stroke="#222" stroke-width="1.500"/>', 'w-8', 'w-4'],
      '|'
    ];
    $('quick').innerHTML = quick.map(q => {
      if (q === '|') return '<span class="h-7 w-px bg-[#bdbdbd]"></span>';
      const pic = `<svg class="size-5" viewBox="0 0 20 20">${q[0]}</svg>`;
      if (q[1] === 'on') return `<button class="mr-1 flex h-[27px] w-[30px] items-center justify-center border border-[#1467b8] bg-[#bcd9f5]">${pic}</button>`;
      return `<button class="flex ${q[1]} items-center justify-center">${pic}</button>` +
        (q[2] ? `<button class="flex ${q[2]} justify-center" aria-label="More"><svg class="h-1 w-[6px]"><use href="#down"/></svg></button>` : '');
    }).join('') + '<button class="pl-2" aria-label="Customize"><svg class="h-[9px] w-[10px]"><use href="#menu"/></svg></button>';

    // Open views
    const docs = [['sheet', 'S.4 - SCHEDULES'], ['house', '{3D}'], ['plan', '1ST Floor'], ['sect', 'Section 3'], ['sect', 'Section 4'], ['sect', 'Section 5'], ['sheet', 'S.3 - Sections']];
    $('docs').innerHTML = docs.map(([icon, name], i) => {
      const on = i === 6;
      return `<button class="flex items-center whitespace-nowrap ${i ? 'w-40 pl-[6px]' : 'w-[177px] pl-[7px]'} ${on ? 'bg-white font-bold text-black' : ''}">
        <svg class="mr-[9px] h-[18px] w-[19px] ${on ? 'text-[#42464e]' : 'text-[#858585]'}"><use href="#${icon}"/></svg>${name}
        ${on ? '<svg class="mr-2 ml-auto size-3"><use href="#close"/></svg>' : ''}</button>`;
    }).join('');

    // Properties rows: [label, value, editable]
    const rows = [
      'Graphics', ['Visibility/Graphi...', 'btn', 1], ['Scale', 'As indicated'],
      'Identity Data', ['Dependency', 'Independent'], ['Referencing Sheet', ''], ['Referencing Det...', ''], ['Current Revision ...', 'off'],
      ['Current Revision ...', ''], ['Current Revision ...', ''], ['Current Revision ...', ''], ['Current Revision ...', ''], ['Current Revision', ''],
      ['Approved By', 'Approver', 1], ['Designed By', 'Designer', 1], ['Checked By', 'Checker', 1], ['Drawn By', 'Author', 1],
      ['Sheet Number', 'S.3', 1], ['Sheet Name', 'Sections', 1], ['Sheet Issue Date', '09/08/23', 1], ['Appears In Shee...', 'check', 1], ['Revisions on She...', 'btn', 1],
      'Other', ['File Path', 'E:\\KAITECH Diplo...']
    ];
    const propValue = (v, label) => {
      if (v === 'btn') return '<button class="block h-[22px] w-[130px] border border-r-2 border-b-2 border-[#a8a8a8] bg-[#e0e0e0] leading-[19px]">Edit...</button>';
      if (v === 'off') return `<input type="checkbox" disabled aria-label="${label}" class="ml-[2px] block size-4 appearance-none border border-[#cccccc] bg-white">`;
      if (v === 'check') return `<span class="relative ml-[2px] block size-4"><input type="checkbox" checked aria-label="${label}" class="block size-4 appearance-none border border-[#333] bg-white"><svg class="pointer-events-none absolute inset-0" viewBox="0 0 16 16"><path d="M3 8l3 4 7-8" fill="none" stroke="#333" stroke-width="1.500"/></svg></span>`;
      return `<span class="block pb-[2px] pl-px">${v}</span>`;
    };
    $('props').innerHTML = rows.map(r => {
      if (typeof r === 'string') return `<tr class="h-6 bg-[#dcdcdc]"><th colspan="2" class="p-0 pl-[2px] text-left font-normal">${r}</th><td class="p-0"><svg class="size-[10px]" viewBox="0 0 10 10"><path d="M2 4l3-3 3 3M2 9l3-3 3 3" fill="none" stroke="#000" stroke-width="1.500"/></svg></td></tr>`;
      return `<tr class="h-6 border-b border-dotted border-[#777] leading-5 ${r[2] ? '' : 'text-[#777]'}"><td class="border-r border-dotted border-[#777] p-0 pb-[2px] pl-[10px] whitespace-nowrap">${r[0]}</td><td class="border-r border-dotted border-[#777] p-0 pl-px whitespace-nowrap">${propValue(r[1], r[0])}</td><td class="border-r border-dotted border-[#777] p-0"></td></tr>`;
    }).join('');

    // Tree: guide cells (| through, T branch, L last branch, + - boxes, p box that ends the line), label, icon
    const tree = [
      ['|+', 'Floor Plans'], ['|+', 'Ceiling Plans'], ['|-', '3D Views'], ['||T', 'Analytical Model'], ['||L', '{3D}'],
      ['|-', 'Elevations (Building Elevation)'], ['||T', 'East'], ['||T', 'North'], ['||T', 'South'], ['||L', 'West'],
      ['|-', 'Sections (Building Section)'], ['||T', 'Section 3'], ['||T', 'Section 4'], ['||T', 'Section 5'], ['||L', 'Section 6'],
      ['|-', 'Drafting Views (Detail)'], ['||L', 'Footings Notes'], ['|p', 'Graphical Column Schedules'],
      ['T', 'Legends', 'legend'], ['-', 'Schedules/Quantities (all)', 'sched'], ['|T', 'Multi-Category Material Takeoff'], ['|T', 'Structural Column Schedule'],
      ['|T', 'Structural Foundation Schedule'], ['|L', 'Structural Framing Schedule'], ['-', 'Sheets (all)', 'sheet'], ['|+', 'S.1 - 1ST Floor Fully Annotated'],
      ['|+', 'S.2 - Notes on Foundation "Drafting"'], ['|+', 'S.3 - Sections'], ['|p', 'S.4 - SCHEDULES'], ['+', 'Families', 'family'], ['+', 'Groups', 'group'], ['L', 'Revit Links', 'link']
    ];
    const cell = c => {
      let s = `<path d="M10.500 0V${'Lp'.includes(c) ? 11 : 22}${c === '|' ? '' : 'M10.500 11.500H27'}" stroke="#888" stroke-dasharray="1 1"/>`;
      if ('+-p'.includes(c)) s += `<rect x="4.500" y="5.500" width="12" height="12" fill="#f4f4f4" stroke="#888"/><path d="M6 11.500h9${c === '-' ? '' : 'M10.500 7v9'}" stroke="#2b4aa8"/>`;
      return `<svg class="h-[22px] w-[26px] shrink-0 overflow-visible" shape-rendering="crispEdges">${s}</svg>`;
    };
    $('tree').innerHTML = tree.map(([g, name, icon]) => `
      <li class="flex h-[22px] items-center whitespace-nowrap">${[...g].map(cell).join('')}
        ${icon ? `<svg class="h-[19px] w-5 text-[#666]"><use href="#${icon}"/></svg>` : ''}
        <span class="ml-[3px] px-[3px] leading-[22px] ${name === 'S.3 - Sections' ? 'bg-[#dedede] font-bold' : ''}">${name}</span></li>`).join('');

    // Taskbar apps: [drawing, running, active]
    const apps = [
      ['<path d="M6 7h13v16H6zM6 1v3h13V1M6 29v-3h13v3M24 2v8M24 19v9" fill="none" stroke="#fff" stroke-width="1.500"/><path d="M22 12h4v5h-4z" fill="#fff"/>'],
      ['<path d="M10 7V2h10v5" fill="none" stroke="#35a7e8" stroke-width="2"/><rect x="1" y="6" width="28" height="24" rx="3" fill="#f5f5f5"/><path d="M9 12h5v5H9z" fill="#e8502f"/><path d="M16 12h5v5h-5z" fill="#7db72f"/><path d="M9 19h5v5H9z" fill="#2b9fe3"/><path d="M16 19h5v5h-5z" fill="#f4b51e"/>'],
      ['<path d="M1 4h10l3 3h14v20H1z" fill="#f3b33a"/><path d="M1 10h27v17H1z" fill="#fcd671"/><path d="M6 28v-9h17v9h-5v-5h-7v5z" fill="#3a8fd8"/>', 1],
      ['<path d="M1 11L15 2l14 9v17H1z" fill="#1569b8"/><path d="M3 10h24L15 20z" fill="#fff"/><path d="M1 12l14 10 14-10v16H1z" fill="#2589dd"/><circle cx="30" cy="24" r="11" fill="#3b3b3b" stroke="#888"/><text x="22" y="29" font-size="14" font-weight="600" fill="#fff">20</text>'],
      ['<circle cx="15" cy="15" r="14" fill="#1c84d4"/><path d="M2 12C5-2 27-2 29 13c1 7-8 8-11 5 4-7-6-12-16-6z" fill="#46cf8c"/><path d="M2 14c3-6 12-5 13 0-5 3-3 13 7 13C12 33-1 25 2 14z" fill="#0f57a3"/><path d="M15 15c1 5 9 6 13 3" fill="none" stroke="#e8f8ff" stroke-width="2"/>'],
      ['<path d="M0 0h30v30H0z" fill="#f4ede9"/><text x="5" y="25" font-size="28" font-weight="800" fill="#b92b27">A</text>', 1],
      ['<path d="M0 0h30v30H0z" fill="#e9f1f8"/><text x="6" y="25" font-size="28" font-weight="800" fill="#1e5a9c">R</text>', 1, 1],
      ['<use href="#chrome"/><circle cx="22" cy="19" r="5" fill="#c7a07c"/><path d="M15 30c0-8 14-8 14 0z" fill="#444"/>', 1],
      ['<circle cx="15" cy="15" r="13" fill="#2196e8"/><path d="M11 8l11 7-11 7z" fill="#fff"/>'],
      ['<path d="M21 1l8 4v20l-8 4L8 16l-5 4-2-1V11l2-1 5 4zM21 9l-8 6 8 6z" fill="#8f62cf" fill-rule="evenodd"/><path d="M21 1l8 4v20l-8 4z" fill="#b48cf0"/>'],
      ['<use href="#chrome"/><circle cx="22" cy="23" r="8" fill="#e55468"/><text x="19" y="27" font-size="10" fill="#fff">A</text>'],
      ['<circle cx="18" cy="5" r="4" fill="#7b83eb"/><circle cx="26" cy="7" r="3" fill="#5059c9"/><path d="M10 11h20v10c0 8-16 8-18 1z" fill="#6a72d8"/><path d="M1 7h15v15H1z" fill="#4b53bc"/><text x="5" y="19" font-size="13" font-weight="700" fill="#fff">T</text>'],
      ['<circle cx="15" cy="15" r="13" fill="#2aa1de"/><path d="M6 15l17-7-3 15-5-4-3 3-1-5 9-7-11 6z" fill="#fff"/>'],
      ['<path d="M8 2h21v26H8z" fill="#f2f7f3" stroke="#1f7244"/><path d="M18 6h8M18 11h8M18 16h8M18 21h8" stroke="#1f7244" stroke-width="3"/><path d="M1 3l17-2v28L1 27z" fill="#1a7440"/><text x="4" y="21" font-size="15" font-weight="700" fill="#fff">X</text>', 1],
      ['<path d="M1 0h28v30H1z" fill="#6b2263"/><text x="8" y="18" font-size="19" font-weight="700" fill="#fff">G</text><text x="8" y="28" font-size="7" font-weight="700" fill="#fff">PDF</text>', 1],
      ['<path d="M10 0h20L22 30h-8z" fill="#9fb3c4"/><path d="M14 4h12l-8 22z" fill="#5f7485"/><path d="M0 5h18v19H0z" fill="#2a7fc4"/><text x="4" y="21" font-size="17" font-weight="700" fill="#fff">E</text>', 1]
    ];
    $('apps').innerHTML = apps.map(([pic, run, active]) => `
      <button class="flex w-[62px] flex-col items-center justify-end ${active ? 'bg-[#505050]' : ''}">
        <svg class="mb-[7px] size-[30px] overflow-visible" viewBox="0 0 30 30">${pic}</svg>
        <span class="h-[3px] ${active ? 'w-full' : 'w-[50px]'} ${run ? 'bg-[#76b9ed]' : ''}"></span></button>`).join('');

    // Sheet drawing
    let out = '';
    const path = (d, a = '') => { out += `<path d="${d}" ${a}/>`; };
    const line = (x1, y1, x2, y2, a) => path(`M${x1} ${y1}L${x2} ${y2}`, a);
    const rect = (x1, y1, x2, y2, a) => path(`M${x1} ${y1}H${x2}V${y2}H${x1}z`, a);
    const text = (x, y, s, size, a = '') => { out += `<text x="${x}" y="${y}" font-size="${size}" fill="#000" stroke="none" ${a}>${s}</text>`; };
    const bubble = (x, y, s, r = 7, size = 7) => {
      out += `<circle cx="${x}" cy="${y}" r="${r}" shape-rendering="auto"/>`;
      text(x, y + 3, s, size, 'text-anchor="middle"');
    };
    const title = (x, y, n, name, scale, end) => {
      bubble(x, y, n, 7, 9);
      line(x + 7, y, end, y);
      text(x + 10, y - 4, name, 9);
      text(x + 13, y + 6, scale, 6);
    };
    const navy = 'stroke="#00005e"';
    const halo = 'stroke="#7b9ae0" stroke-width="3"';
    const blueRect = (x1, y1, x2, y2) => { rect(x1, y1, x2, y2, halo); rect(x1, y1, x2, y2, navy); };
    const blueLine = (x1, y1, x2, y2) => { line(x1, y1, x2, y2, halo); line(x1, y1, x2, y2, navy); };

    // frame and title block
    blueRect(481.5, 306.5, 1380.5, 942.5);
    blueRect(504.5, 329.5, 1357.5, 919.5);
    blueLine(1250.5, 330, 1250.5, 919);
    blueRect(1255.5, 332.5, 1354.5, 416.5);
    blueLine(1256, 395.5, 1354, 395.5);
    blueRect(1255.5, 420.5, 1354.5, 596.5);
    blueRect(1255.5, 600.5, 1354.5, 740.5);
    for (let i = 0; i < 21; i++) blueLine(1256, Math.round(609 + i * 6.24) + 0.5, 1354, Math.round(609 + i * 6.24) + 0.5);
    blueLine(1273.5, 601, 1273.5, 740);
    blueLine(1328.5, 601, 1328.5, 740);
    blueRect(1255.5, 743.5, 1354.5, 916.5);
    [791.5, 824.5, 838.5, 852.5, 866.5, 880.5, 902.5].forEach(y => blueLine(1256, y, 1354, y));
    const tag = (x1, y1, x2, y2, s, size, anchor = 'middle') => {
      rect(x1, y1, x2, y2, 'stroke="#7b9ae0" fill="#fff"');
      const tx = anchor === 'middle' ? (x1 + x2) / 2 : anchor === 'end' ? x2 - 2 : x1 + 2;
      text(tx, (y1 + y2) / 2 + Math.round(size * 0.36), s, size, `text-anchor="${anchor}" style="fill:#00125e"`);
    };
    tag(1282.5, 744.5, 1326.5, 761.5, 'Kaiteck', 12);
    tag(1266.5, 770.5, 1342.5, 787.5, 'Project Name', 12);
    tag(1279.5, 799.5, 1329.5, 817.5, 'Sections', 12);
    tag(1293.5, 882.5, 1315.5, 900.5, 'S.3', 12);
    [['Project number', 'Project Number', 825.5, 1294.5, 1296.5], ['Date', 'Issue Date', 839.5, 1271.5, 1312.5], ['Drawn by', 'Author', 853.5, 1281.5, 1326.5],
     ['Checked by', 'Checker', 867.5, 1287.5, 1320.5], ['Scale', 'As indicated', 904.5, 1273.5, 1307.5]].forEach(([a, b, y, xa, xb]) => {
      tag(1257.5, y + 1, xa, y + 10, a, 5, 'start');
      tag(xb, y, 1352.5, y + 11, b, 8, 'end');
    });
    tag(1258.5, 401.5, 1349.5, 411.5, 'www.autodesk.com/revit', 5);
    [[1264.5, 431.5], [1315.5, 431.5], [1264.5, 472.5], [1315.5, 472.5]].forEach(([x, y]) => {
      rect(x, y, x + 29, y + 35, 'stroke="#7b9ae0"');
      ['Consultant', 'Address', 'Address', 'Phone', 'Fax', 'e-mail'].forEach((s, i) => text(x + 2, y + 6 + i * 5, s, 5, 'style="fill:#00125e"'));
    });
    text(1256, 607, 'No.', 6, 'font-weight="700"');
    text(1275, 607, 'Description', 6, 'font-weight="700"');
    text(1331, 607, 'Date', 6, 'font-weight="700"');
    path('M1260 375l7-14h3l5 14h-5l-3-8-3 8z', 'fill="#2a7fc0" stroke="none"');
    path('M1260 375l6-13 3 5-4 7z', 'fill="#4f9a70" stroke="none"');
    text(1277, 371, 'AUTODESK', 12, 'font-family="Inter" font-weight="500"');
    rect(1365.5, 869.5, 1371.5, 919.5, 'stroke="#7b9ae0"');
    out += '<text transform="translate(1371 918) rotate(-90)" font-size="5" font-weight="700" fill="#000" stroke="none">8/18/2024 9:07:51 PM</text>';

    // Section 3
    const dash = 'stroke-dasharray="16 4 3 4"';
    bubble(594.5, 348.5, '10');
    line(594.5, 356, 594.5, 745, dash);
    rect(545.5, 369.5, 646.5, 716.5);
    [['Upper Roof', 35700, 382.5], ['Roof', 32400, 417.5], ['6th Floor', 28600, 458.5], ['5th Floor', 24800, 498.5], ['4th Floor', 21000, 539.5],
     ['3rd Floor', 17200, 580.5], ['2ND Floor', 13400, 620.5], ['1ST Floor', 9600, 661.5], ['Ground', 5700, 703.5]].forEach(([name, z, y], i) => {
      line(518, y, 536, y);
      line(541, y, 545, y);
      if (i) path(`M545.500 ${y}H646.500V${y + 4}H562.500V${y + 3}H545.500z`, 'fill="#808080"');
      else line(545, y, 647, y, 'stroke-dasharray="7 5 18 5"');
      line(647, y, 650, y);
      line(655, y, 674, y);
      out += `<circle cx="679" cy="${y - 1}" r="4.500" fill="#fff" stroke="#0a3db0" shape-rendering="auto"/>`;
      path(`M679 ${y - 1}v-4.500a4.500 4.500 0 0 0-4.500 4.500zM679 ${y - 1}v4.500a4.500 4.500 0 0 0 4.500-4.500z`, 'fill="#0a3db0" stroke="none"');
      text(670, y - 2, name, 5, 'text-anchor="end"');
      text(670, y + 5, z, 5, 'text-anchor="end"');
    });
    title(512.5, 757.5, 2, 'Section 3', '1 : 100', 682);

    // Section 5
    const gx = [823.5, 855.5, 887.5, 919.5, 951.5, 983.5, 1015.5, 1018.5, 1050.5, 1082.5, 1114.5, 1146.5];
    const fy = [391.5, 411.5, 431.5, 452.5, 473.5, 492.5, 514.5, 533.5, 559.5];
    rect(713.5, 366.5, 1241.5, 600.5);
    fy.forEach((y, i) => {
      const thin = i === 2 || i === 5 || i === 7;
      line(818, y, 1149, y, thin ? '' : 'stroke-width="2"');
      line(824, y + (thin ? 2 : 4), 1149, y + (thin ? 2 : 4));
      if (thin) line(824, y + 4, 1149, y + 4);
      if (i < 5) line(1067, y + 1, 1149, y + 1, 'stroke-width="2"');
    });
    gx.forEach((x, i) => {
      bubble(x, 353, i + 1);
      line(x, 360, x, 391, 'stroke-dasharray="10 4 4 4"');
      line(x, 395, x, 588, 'stroke="#fff" stroke-width="3"');
      line(x - 2, 392, x - 2, 588);
      line(x + 1, 392, x + 1, 588);
      line(x, 392, x, 588, 'stroke-dasharray="9 5"');
      line(x, 594, x, 603);
      path(`M${x - 6} 588.500H${x + 6}V590.500H${x + 11}V592.500H${x - 11}V590.500H${x - 6}z`, 'fill="#fff"');
    });
    fy.forEach((y, i) => line(818, y, 1149, y, i === 2 || i === 5 || i === 7 ? '' : 'stroke-width="2"'));
    line(818.5, 391, 818.5, 588);
    line(822, 391, 822, 588, 'stroke-width="2"');
    line(1148.5, 391, 1148.5, 588);
    line(1128.5, 393, 1128.5, 588);
    line(1132.5, 393, 1132.5, 588);
    fy.forEach((y, i) => {
      const b = (fy[i + 1] || 588) - 3;
      const m = Math.round((y + b) / 2) + 0.5;
      [[905, 914], [1053, 1060]].forEach(([a, c]) => {
        rect(a, m, a + 4, b + 2, 'fill="#000"');
        rect(c, y + 3, c + 4, y + 8, 'fill="#000"');
        line(a + 4, m + 1, c, y + 8, 'stroke-width="2"');
      });
    });
    [[885.5, 921.5, 904], [1048.5, 1084.5, 1066]].forEach(([a, b, c]) => {
      path(`M${a} 391V373.500H${b}V391`, 'stroke-width="2"');
      path(`M${a + 3} 391V377.500H${b - 3}V391`);
      line(c, 378, c, 594, 'stroke-width="2"');
      rect(a - 3, 594.5, b + 3, 597.5);
      rect(a - 7, 597.5, b + 6, 600.5);
      line(b - 1, 378, b - 1, 588);
    });
    line(1015, 392, 1015, 592, 'stroke-width="2"');
    line(1019, 392, 1019, 592, 'stroke-width="2"');
    line(1017, 392, 1017, 588, 'stroke-width="2" stroke-dasharray="7 4"');
    line(814, 592.5, 1185, 592.5);
    line(824, 588.5, 1160, 588.5, 'stroke-dasharray="13 6"');
    rect(1148.5, 564.5, 1178.5, 587.5);
    line(1149, 578.5, 1178, 578.5, 'stroke-width="2"');
    path('M1149 585.500H1178M1140 588.500H1184V592');
    path('M1178 572.500H1241M1185.500 572V567.500H1215.500V572M1217.500 572V567.500H1230.500V572M1198.500 567V564.500H1202.500V567M1222.500 567V564.500H1225.500V567M1230 568.500H1241');
    path('M766.500 552.500H768.500V568.500H772V571.500H766.500zM805.500 559.500H818V561.500H805.500zM807 564H813M810 562L818 559');
    [[998, 534.5], [928, 560.5], [998, 560.5]].forEach(([x, y]) => rect(x, y, x + 9, y + 2, 'fill="#fff"'));
    title(707.5, 632.5, 4, 'Section 5', '1 : 200', 1242);

    // Section 6
    const ax = [900.5, 916.5, 932.5, 965.5, 996.5, 1028.5, 1061.5, 1093.5, 1125.5];
    const ay = [680.5, 700.5, 720.5, 741.5, 761.5, 781.5, 802.5, 823.5, 848.5, 876.5];
    rect(841.5, 655.5, 1214.5, 889.5);
    ay.slice(0, 9).forEach(y => line(912, y + 3, 1112, y + 3));
    ax.forEach((x, i) => {
      bubble(x, 641.5, 'ABCDEFGHI'[i]);
      line(x, 648, x, 680, 'stroke-dasharray="12 4 4 4"');
      line(x, 880, x, 891);
      if (i > 1 && i < 8) {
        line(x, 681, x, 876, 'stroke="#fff" stroke-width="3"');
        line(x - 1, 681, x - 1, 876, 'stroke-width="2"');
        line(x + 2, 681, x + 2, 876);
        path(`M${x - 5} 875.500H${x + 5}V878.500H${x + 9}V880.500H${x - 9}V878.500H${x - 5}z`, 'fill="#e8e8e8"');
      }
    });
    [897.5, 900.5, 907.5, 912.5, 916.5, 1114.5, 1120.5, 1125.5, 1131.5].forEach(x => line(x, 661, x, 882, x === 1125.5 ? 'stroke-dasharray="9 5"' : ''));
    line(1130.5, 661, 1130.5, 882);
    line(898.5, 661, 898.5, 882);
    path('M897 662H965.500V681M1061.500 681V662H1132', 'stroke-width="2"');
    path('M908 665.500H965M1061 665.500H1113M929.500 662V876M934.500 662V876M1091.500 662V680M1094.500 662V680');
    ay.slice(0, 9).forEach((y, i) => {
      const thin = i === 2 || i === 5;
      line(897, y, 1132, y, thin ? '' : 'stroke-width="2"');
      if (thin) line(897, y + 2, 1132, y + 2);
      const b = ay[i + 1], m = Math.round((y + b) / 2) - 0.5;
      const brace = `M925 ${y + 1}L903 ${m}L925 ${b - 1}M1103 ${y + 1}L1127 ${m}L1103 ${b - 1}`;
      path(brace, 'stroke-width="3" shape-rendering="auto"');
      path(brace, 'stroke="#fff" shape-rendering="auto"');
      rect(901, m - 1, 905, m + 1, 'fill="#000"');
      rect(1124, m - 1, 1128, m + 1, 'fill="#000"');
    });
    line(891, 876.5, 1136, 876.5, 'stroke-dasharray="14 6"');
    line(891, 880.5, 1136, 880.5);
    path('M919 834H996V852M919 852H965', 'stroke-width="2"');
    path('M919 836.500H996M940.500 836V848M942.500 836V848M960.500 836V848M980 838L994 845L984 848');
    [[893.5, 882.5, 916.5, 886.5], [890.5, 886.5, 919.5, 889.5], [1110.5, 882.5, 1134.5, 886.5], [1106.5, 886.5, 1137.5, 889.5]].forEach(r => rect(...r, 'fill="#fff"'));
    path('M865.500 840V859.500H872M867.500 840V857H870V859M865 840.500H868M1170.500 840V859.500H1163M1168.500 840V857H1166V859M1168 840.500H1171');
    line(876, 860.5, 898, 860.5, 'stroke-width="2"');
    rect(892.5, 855.5, 897.5, 860.5);
    title(835.5, 906.5, 1, 'Section 6', '1 : 200', 1229);

    // Section 4
    rect(518.5, 839.5, 802.5, 871.5);
    line(518, 854.5, 802, 854.5, 'stroke="#888"');
    [569.5, 633.5, 697.5, 761.5].forEach((x, i) => {
      bubble(x, 805.5, i + 2);
      line(x, 812, x, 875, 'stroke-dasharray="15 4 4 4"');
      line(x - 10, 854.5, x + 10, 854.5, 'stroke="#e22"');
    });
    path('M518 845.500H555V844.500H583V845.500H631M700 845.500H748V844.500H776V845.500H802');
    path('M522.500 854V850.500H551.500V854M586.500 854V850.500H631M700 850.500H743.500V854M778.500 854V850.500H802M567.500 854V846.500H571.500V854M759.500 854V846.500H763.500V854');
    path('M631.500 839V857M634.500 839V857M664.500 839V857M667.500 839V857M696.500 839V857M699.500 839V857');
    path('M616.500 871V866.500H620.500V857.500H708.500V866.500H713.500V871');
    line(616, 871, 714, 871, 'stroke-width="2"');
    line(681.5, 812, 681.5, 874);
    rect(681, 871, 691, 873, 'fill="#000"');
    path('M681.500 797l8.500 8.500-8.500 8.500z', 'fill="#0a3db0" stroke="none"');
    out += '<circle cx="681.500" cy="805.500" r="6" fill="#fff" stroke="#0a3db0" shape-rendering="auto"/>';
    line(674, 805.5, 690, 805.5, 'stroke="#0a3db0"');
    title(512.5, 906.5, 3, 'Section 4', '1 : 100', 802);

    $('sheetView').setAttribute('shape-rendering', 'crispEdges');
    $('sheetView').innerHTML = out;
  </script>
</body>
</html>
